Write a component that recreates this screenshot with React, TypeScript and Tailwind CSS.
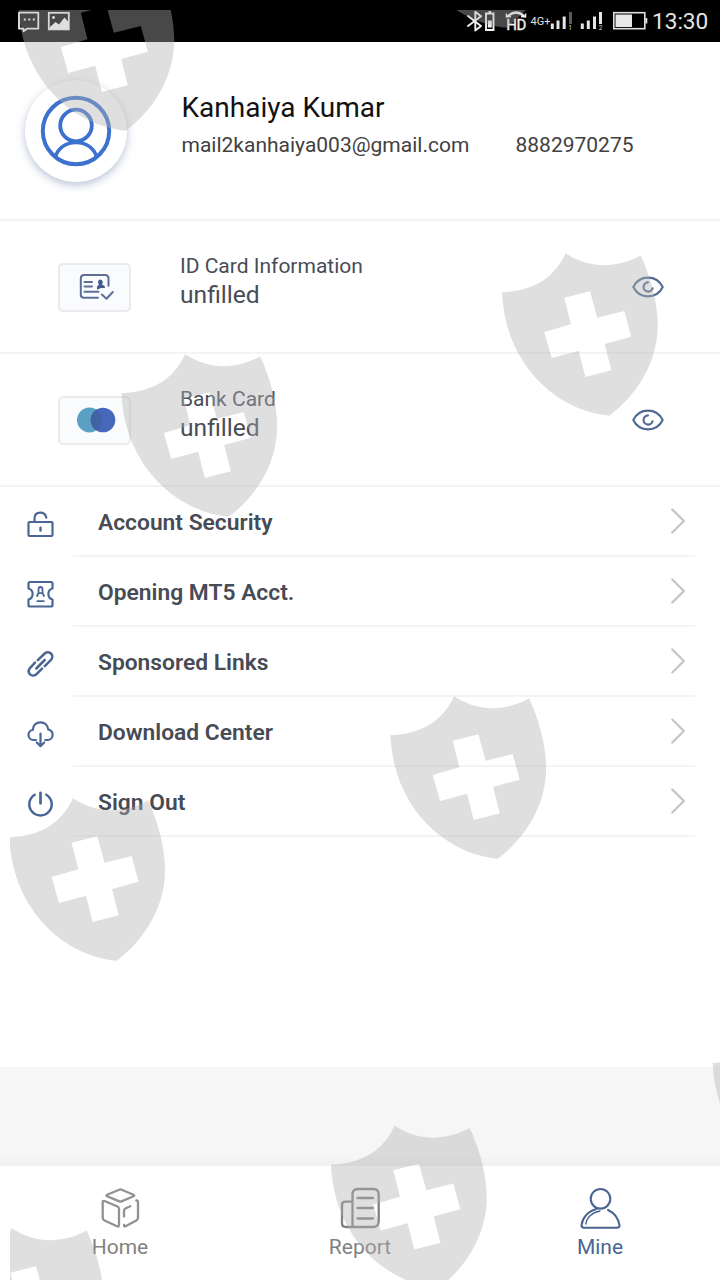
import React from "react";

const stroke = {
  fill: "none",
  strokeLinecap: "round" as const,
  strokeLinejoin: "round" as const,
};

const shieldPath =
  "M0 39.3C32 38 52 25 63.7 .3C87 15.5 113 16 138.7 2.5C149 25 156 50 155.7 74C155 110 135 142 107.3 162.7C55 158 3 112 0 39.3Z" +
  "M62.3 44.7L69 71.3L42.3 79L49.7 105L76.7 97.7L83.3 124L109.3 117.3L102.7 91L129.3 83.7L122.3 58L95.3 64.7L88 38.3Z";

const shields: [number, number][] = [
  [18.5, -32],
  [399, -135],
  [502, 253],
  [121.5, 354],
  [390.4, 696],
  [9.3, 798],
  [712.7, 1023.7],
  [331, 1125.5],
  [-52, 1228],
];

function Watermark() {
  return (
    <svg className="pointer-events-none absolute inset-0" width="720" height="1280" viewBox="0 0 720 1280">
      <defs>
        <clipPath id="tile">
          <path d="M10 10H720V1280H10Z" />
        </clipPath>
      </defs>
      <g clipPath="url(#tile)" fill="#b0b0b0" fillOpacity="0.408" fillRule="evenodd">
        {shields.map(([x, y]) => (
          <path key={`${x}:${y}`} d={shieldPath} transform={`translate(${x} ${y})`} />
        ))}
      </g>
    </svg>
  );
}

function StatusBar() {
  return (
    <header className="flex h-[42px] items-center justify-between bg-black pl-[18px] pr-[11px] text-[#e4e4e4]">
      <svg width="54" height="42" viewBox="18 0 54 42">
        <path d="M19 12.7H38.3V28.7H27L23.5 31.2V28.7H19Z" {...stroke} stroke="#f2f2f2" strokeWidth="1.8" />
        <path d="M23.8 19.5h2M28.3 19.5h2M32.8 19.5h2" stroke="#f2f2f2" strokeWidth="2" />
        <rect x="48.8" y="12.8" width="20" height="16.6" fill="none" stroke="#f2f2f2" strokeWidth="1.8" />
        <path d="M50 29V27L55.5 22L59 24.5L64.5 17.5L68.5 22V29Z" fill="#fff" />
        <circle cx="53.5" cy="17.5" r="1.4" fill="#fff" />
      </svg>
      <div className="flex items-center">
        <svg width="185" height="42" viewBox="467 0 185 42">
          <path d="M468 16L481 26L475.3 30.5V11.8L481 16.3L468 26" {...stroke} stroke="#f2f2f2" strokeWidth="1.9" />
          <path d="M486 13.5H493.5V30H486Z M488.5 12h2.5" fill="none" stroke="#f2f2f2" strokeWidth="1.9" />
          <rect x="487.8" y="20.5" width="4" height="7" fill="#f2f2f2" />
          <path d="M507.5 16.5Q516 8.5 524.5 16.5" fill="none" stroke="#f2f2f2" strokeWidth="2.2" />
          <path d="M506.5 13.5V17L511 16.5M525.5 13.5V17L521 16.5" fill="none" stroke="#f2f2f2" strokeWidth="1.5" />
          <text x="506.3" y="29.5" fontSize="15" fontFamily="Roboto, sans-serif" fill="#f2f2f2" stroke="#f2f2f2" strokeWidth="0.4" textLength="20">HD</text>
          <text x="530.5" y="25" fontSize="11" fontFamily="Roboto, sans-serif" fill="#e2e2e2" textLength="20">4G+</text>
          <path d="M552.3 29V23.5M558 29V20.5M564.2 29V16.5M582.3 29V23.5M588.3 29V20.5M594.5 29V16.5" stroke="#e6e6e6" strokeWidth="3" />
          <path d="M570.5 24V12" stroke="#5a5a5a" strokeWidth="3" />
          <path d="M600.5 24V12" stroke="#e6e6e6" strokeWidth="3" />
          <text x="568.3" y="29.5" fontSize="6.5" fontFamily="Roboto, sans-serif" fill="#ddd">1</text>
          <text x="598.7" y="29.5" fontSize="6.5" fontFamily="Roboto, sans-serif" fill="#ddd">2</text>
          <rect x="613.8" y="12.7" width="31" height="16" fill="none" stroke="#e0e0e0" strokeWidth="1.6" />
          <rect x="615.5" y="14.5" width="16.5" height="12.5" fill="#e8e8e8" />
          <path d="M646.3 18V23.5" stroke="#e0e0e0" strokeWidth="2" />
        </svg>
        <span className="w-[57px] whitespace-nowrap pt-[2px] text-[22.6px] leading-[40px]">13:30</span>
      </div>
    </header>
  );
}

function Avatar() {
  return (
    <div className="flex size-[102px] items-center justify-center rounded-full bg-white shadow-[0_3px_8px_rgba(70,95,150,0.38)]">
      <svg width="74" height="74" viewBox="40 94 74 74" className="text-[#3c71cf]">
        <circle cx="77" cy="131" r="33.2" fill="none" stroke="currentColor" strokeWidth="4" />
        <circle cx="77" cy="125.5" r="15.8" fill="none" stroke="currentColor" strokeWidth="3.8" />
        <path d="M56 157C60 147 67 142.5 77 142.5C87 142.5 94 147 98 157" fill="none" stroke="currentColor" strokeWidth="3.6" />
      </svg>
    </div>
  );
}

function IdIcon() {
  return (
    <svg width="36" height="28" viewBox="79.5 273.5 36 28" stroke="#5d6f96" strokeWidth="2" {...stroke} className="ml-[4px]">
      <path d="M98.5 298.3H84.5Q81.3 298.3 81.3 295V279Q81.3 275.5 84.5 275.5H105.5Q109 275.5 109 279V286.3" />
      <path d="M85 282.5H92.5M85 287H92.5M85 292.3H99M102.3 295L107 299.3L113.3 292.5" />
      <path d="M100.8 280A2.6 2.8 0 0 1 102.3 285L105.3 286.5V288.5H101.5L97.5 290.3V287L99.5 285A2.6 2.8 0 0 1 100.8 280Z" fill="#465b8c" stroke="none" />
    </svg>
  );
}

function BankIcon() {
  return (
    <svg width="40" height="26" viewBox="76 407 40 26" className="ml-[2px]">
      <circle cx="89.5" cy="420" r="12.5" fill="#5aa0c2" />
      <circle cx="103" cy="420" r="12.3" fill="#4767bb" />
      <path d="M96.3 409.6A12.4 12.4 0 0 1 96.3 430.4A12.4 12.4 0 0 1 96.3 409.6Z" fill="#4163a4" />
    </svg>
  );
}

function Eye() {
  return (
    <svg width="34" height="24" viewBox="-17 -12 34 24" stroke="#4f6b92" strokeWidth="2.1" {...stroke}>
      <path d="M-14.7 0C-11.5 -6.5 -6 -9.4 0 -9.4C6 -9.4 11.5 -6.5 14.7 0C11.5 6.5 6 9.4 0 9.4C-6 9.4 -11.5 6.5 -14.7 0Z" />
      <path d="M0 -4.6A4.6 4.6 0 1 0 4.6 1.2" />
    </svg>
  );
}

function InfoRow({ icon, label }: { icon: React.ReactNode; label: string }) {
  return (
    <section className="flex h-[133px] items-center border-b-2 border-[#f4f4f5] pl-[58px] pr-[55.5px] pt-px">
      <div className="flex h-[49px] w-[73px] items-center justify-center rounded-[5px] border-2 border-[#ebebed] bg-[#fafbfc]">
        {icon}
      </div>
      <div className="ml-[49px] flex-1 pb-[12px]">
        <p className="text-[21px] leading-[27px] text-[#484c56]">{label}</p>
        <p className="text-[24.6px] leading-[30px] text-[#484c56]">unfilled</p>
      </div>
      <Eye />
    </section>
  );
}

const menu = [
  {
    label: "Account Security",
    icon: (
      <>
        <rect x="1.5" y="12" width="24" height="14" rx="1" />
        <path d="M7.5 12V8.5C7.5 4.5 10 2.7 13.3 2.7C16.5 2.7 18.7 4.5 19.3 7.7" />
        <path d="M13.5 17.7V20.5" strokeWidth="2.4" />
      </>
    ),
  },
  {
    label: "Opening MT5 Acct.",
    icon: (
      <>
        <path d="M3 2H24Q25.5 2 25.5 3.5V8.5C20 10 20 18 25.5 19.5V25Q25.5 26.5 24 26.5H3Q1.5 26.5 1.5 25V19.5C7 18 7 10 1.5 8.5V3.5Q1.5 2 3 2Z" />
        <path d="M10 16L11.5 13V9.5Q11.5 7 13.5 7Q15.5 7 15.5 9.5V13L17 16M11.5 13.2H15.5M10.3 21.2H16.8" strokeWidth="1.8" />
      </>
    ),
  },
  {
    label: "Sponsored Links",
    icon: (
      <g strokeWidth="2.5">
        <path d="M10.8 10.2L17.2 4C19.3 1.9 22.2 1.8 24 3.5C25.8 5.3 25.7 8 23.8 10L17.8 16.2" />
        <path d="M8 12.7L3.2 17.8C1.4 19.8 1.3 22.5 3 24.3C4.8 26 7.8 25.8 9.8 23.8L15 18.6" />
        <path d="M9.3 18.5L17.7 10" />
      </g>
    ),
  },
  {
    label: "Download Center",
    icon: (
      <>
        <path d="M9 20H6.5C3.5 20 1.5 17.8 1.5 15C1.5 12 3.7 10.2 5.8 10C6 5.3 9.2 2.3 13.5 2.3C17.7 2.3 20.8 5.3 21.2 9.5C23.7 10 25.6 12 25.6 15C25.6 17.8 23.5 20 20.5 20H18.3" />
        <path d="M13.5 13.5V26M9.8 22.5L13.5 26.2L17.2 22.5" />
      </>
    ),
  },
  {
    label: "Sign Out",
    icon: (
      <>
        <path d="M7.7 4.7A11.2 11.2 0 1 0 19.3 4.7" strokeWidth="2.5" />
        <path d="M13.5 2.8V13.3" strokeWidth="2.7" />
      </>
    ),
  },
];

function MenuRow({ icon, label }: { icon: React.ReactNode; label: string }) {
  return (
    <li className="flex h-[70px] pl-[27.4px] pr-[25px]">
      <svg width="28" height="28" viewBox="0 0 28 28" className="mt-[22.7px]" stroke="#4a6694" strokeWidth="2.2" {...stroke}>
        {icon}
      </svg>
      <div className="ml-[17.6px] flex flex-1 items-center justify-between border-b-2 border-[#f4f4f4] pl-[25px] pr-[8px]">
        <span className="pt-[3px] text-[22.8px] font-semibold leading-[30px] text-[#474b55]">{label}</span>
        <svg width="18" height="28" viewBox="0 0 18 28" stroke="#c6c6c6" strokeWidth="2.4" {...stroke}>
          <path d="M3.3 2.5L14.8 14L3.3 25.5" />
        </svg>
      </div>
    </li>
  );
}

const tabs = [
  {
    label: "Home",
    color: "text-[#828282]",
    icon: (
      <g strokeWidth="2.3" className="text-[#919191]">
        <path stroke="currentColor" d="M20.5 2.3L33.5 7.7Q35 8.3 33.5 9.2L21.5 14.4Q20.5 14.9 19.5 14.4L7 9.2Q5.8 8.3 7 7.7Z" />
        <path stroke="currentColor" d="M2.7 15Q2.7 13.3 4.5 14L17.5 19.5Q19 20.2 19 22V37.5Q19 40.2 17 39.3L4.5 33.5Q2.7 32.7 2.7 30.5Z" />
        <path stroke="currentColor" d="M36.3 13.5Q38 13.2 38 15V30.5Q38 32.5 36.3 33.5L25.5 39.3Q24 39.9 24 38M24 29.5V24Q24 22 25.8 21.2L30.3 19.3" />
      </g>
    ),
  },
  {
    label: "Report",
    color: "text-[#828282]",
    icon: (
      <g strokeWidth="2.3">
        <path d="M12.5 40V7.5Q12.5 2 18 2H33.5Q38.7 2 38.7 7.5V34Q38.7 40 33 40H5.5Q2 40 2 36.5V18Q2 14.7 5.5 14.7H12.5" />
        <path d="M17.5 11H33M17.5 21H33M17.5 31.5H33" />
      </g>
    ),
  },
  {
    label: "Mine",
    color: "text-[#4a6591]",
    icon: (
      <g strokeWidth="2.1">
        <circle cx="20.5" cy="11.8" r="9.8" />
        <path d="M16.5 22C8 24 2.3 31 1.5 38.3Q1.5 40.7 4 40.7H37Q39.8 40.7 39.5 38.3C38.3 31 34.5 26 28 23" />
        <path d="M5.8 37C6.5 31 11.5 25.5 20 24" strokeWidth="1.4" />
      </g>
    ),
  },
];

export default function App() {
  return (
    <div className="relative flex h-[1280px] w-[720px] flex-col overflow-hidden bg-[#f6f6f6] font-[Roboto,sans-serif]">
      <StatusBar />
      <main className="h-[1025px] bg-white">
        <section className="flex h-[179px] border-b-2 border-[#f4f4f5] pl-[25px]">
          <div className="pt-[37.5px]">
            <Avatar />
          </div>
          <div className="ml-[54.5px] pt-[46px]">
            <h1 className="text-[28px] leading-[40px] text-[#111]">Kanhaiya Kumar</h1>
            <div className="flex text-[21px] leading-[34px] text-[#414141]">
              <span className="w-[334px]">mail2kanhaiya003@gmail.com</span>
              <span>8882970275</span>
            </div>
          </div>
        </section>
        <InfoRow icon={<IdIcon />} label="ID Card Information" />
        <InfoRow icon={<BankIcon />} label="Bank Card" />
        <ul>
          {menu.map((m) => (
            <MenuRow key={m.label} {...m} />
          ))}
        </ul>
      </main>
      <nav className="mt-auto grid h-[114px] grid-cols-3 bg-white shadow-[0_-2px_12px_rgba(0,0,0,0.05)]">
        {tabs.map((t) => (
          <div key={t.label} className={`flex flex-col items-center pt-[21px] ${t.color}`}>
            <svg width="42" height="43" viewBox="0 0 42 43" stroke="currentColor" {...stroke} className="ml-[2px]">
              {t.icon}
            </svg>
            <span className="mt-[3px] text-[21px] leading-[29px]">{t.label}</span>
          </div>
        ))}
      </nav>
      <Watermark />
    </div>
  );
}
